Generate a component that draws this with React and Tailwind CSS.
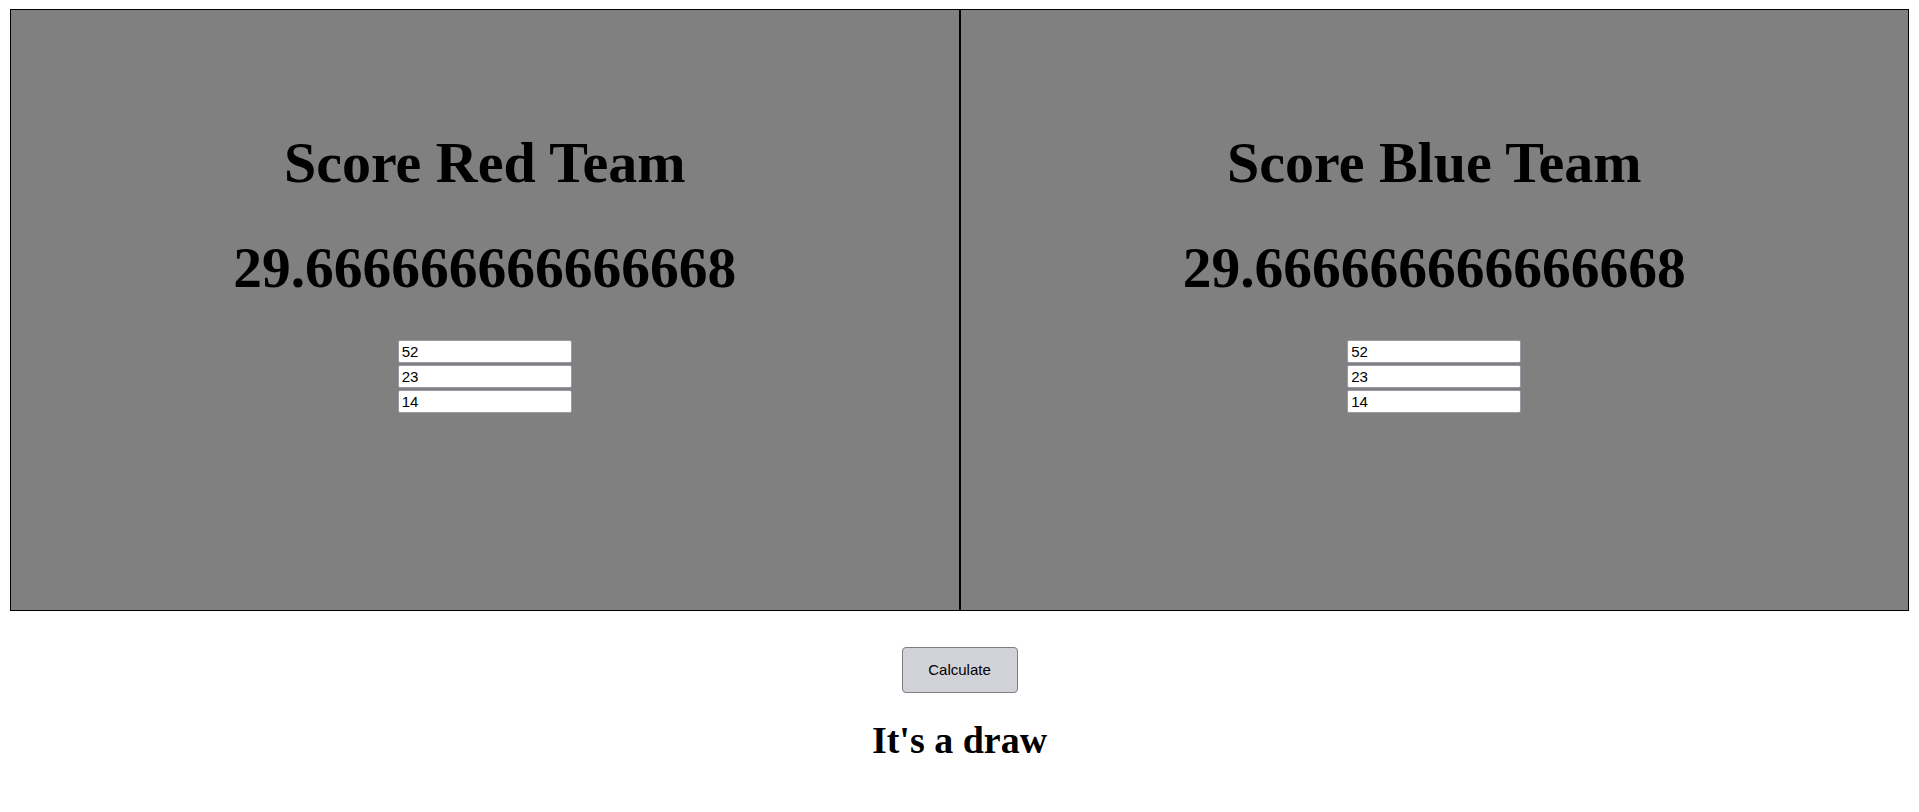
const teams = [
  { name: 'Score Red Team', score: '29.666666666666668', values: ['52', '23', '14'] },
  { name: 'Score Blue Team', score: '29.666666666666668', values: ['52', '23', '14'] },
];

function TeamPanel({ team }) {
  return (
    <div className="flex-1 flex flex-col items-center border border-black bg-[#808080] pt-[121px]">
      <h1 className="text-[58px] leading-[64px] font-bold text-black font-['Liberation_Serif',serif]">
        {team.name}
      </h1>
      <h1 className="mt-[41px] text-[57.5px] leading-[64px] font-bold text-black font-['Liberation_Serif',serif]">
        {team.score}
      </h1>
      <div className="mt-[40px] flex flex-col gap-[2px]">
        {team.values.map((v, i) => (
          <input
            key={i}
            defaultValue={v}
            className="w-[174px] h-[23px] px-[3px] bg-white border border-[#9a9aa6] rounded-[2px] text-[15px] text-black font-['Liberation_Sans',sans-serif] outline-none"
          />
        ))}
      </div>
    </div>
  );
}

export default function App() {
  return (
    <div className="min-h-screen bg-white pt-[9px] px-[10px]">
      <div className="flex h-[602px]">
        {teams.map((t) => (
          <TeamPanel key={t.name} team={t} />
        ))}
      </div>

      <div className="flex flex-col items-center">
        <button className="mt-[36px] w-[116px] h-[46px] bg-[#d1d2d7] border border-[#7c7c84] rounded-[4px] text-[15px] text-black font-['Liberation_Sans',sans-serif]">
          Calculate
        </button>
        <h2 className="mt-[26px] text-[38px] leading-[43px] font-bold text-black font-['Liberation_Serif',serif]">
          It's a draw
        </h2>
      </div>
    </div>
  );
}
